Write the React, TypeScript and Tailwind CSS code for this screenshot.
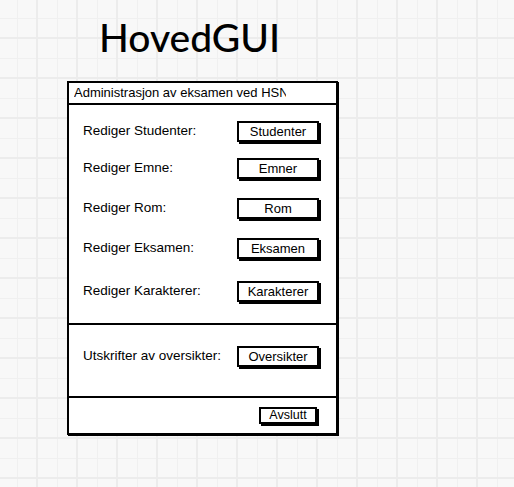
const rows = [
  { label: 'Rediger Studenter:', button: 'Studenter', gap: 'mt-[16px]' },
  { label: 'Rediger Emne:', button: 'Emner', gap: 'mt-[16px]' },
  { label: 'Rediger Rom:', button: 'Rom', gap: 'mt-[19px]' },
  { label: 'Rediger Eksamen:', button: 'Eksamen', gap: 'mt-[19px]' },
  { label: 'Rediger Karakterer:', button: 'Karakterer', gap: 'mt-[22px]' },
];

function SketchButton({ children, small }: { children: string; small?: boolean }) {
  return (
    <div
      className={
        small
          ? 'flex h-[17px] w-[58px] items-center justify-center border-2 border-black bg-white text-[12.5px] shadow-[2px_2px_0_#000]'
          : 'flex h-[21px] w-[82px] items-center justify-center border-2 border-black bg-white text-[13px] shadow-[2px_2px_0_#000]'
      }
    >
      {children}
    </div>
  );
}

function Row({ label, button, gap }: { label: string; button: string; gap: string }) {
  return (
    <div className={`flex h-[21px] items-center justify-between pl-[14px] pr-[17px] ${gap}`}>
      <span className="text-[13.5px]">{label}</span>
      <SketchButton>{button}</SketchButton>
    </div>
  );
}

export default function App() {
  return (
    <div
      className="h-[487px] w-[514px] overflow-hidden bg-[#f8f8f8] bg-[linear-gradient(to_right,#ececec_2px,transparent_2px),linear-gradient(to_bottom,#ececec_2px,transparent_2px),linear-gradient(to_right,#f0f0f0_1px,transparent_1px),linear-gradient(to_bottom,#f0f0f0_1px,transparent_1px)] bg-[size:40px_40px,40px_40px,20px_20px,20px_20px] bg-[position:36px_37px,36px_37px,17px_18px,17px_18px] pt-[14px] font-['Liberation_Sans',Arial,sans-serif] text-black"
    >
      <h1 className="ml-[99px] font-['Lato',sans-serif] text-[39px] font-medium leading-[46px]">
        HovedGUI
      </h1>
      <div className="ml-[67px] mt-[21px] flex w-[271px] flex-col border-2 border-black bg-white shadow-[1px_1px_0_#000]">
        <div className="flex h-[22px] items-center border-b-2 border-black pl-[5px]">
          <div className="w-[212px] overflow-hidden whitespace-nowrap text-[13px]">
            Administrasjon av eksamen ved HSN
          </div>
        </div>
        <div className="flex h-[218px] flex-col">
          {rows.map((r) => (
            <Row key={r.button} {...r} />
          ))}
        </div>
        <div className="flex h-[73px] flex-col border-t-2 border-black">
          <Row label="Utskrifter av oversikter:" button="Oversikter" gap="mt-[21px]" />
        </div>
        <div className="flex h-[37px] items-start justify-end border-t-2 border-black pr-[19px] pt-[9px]">
          <SketchButton small>Avslutt</SketchButton>
        </div>
      </div>
    </div>
  );
}
